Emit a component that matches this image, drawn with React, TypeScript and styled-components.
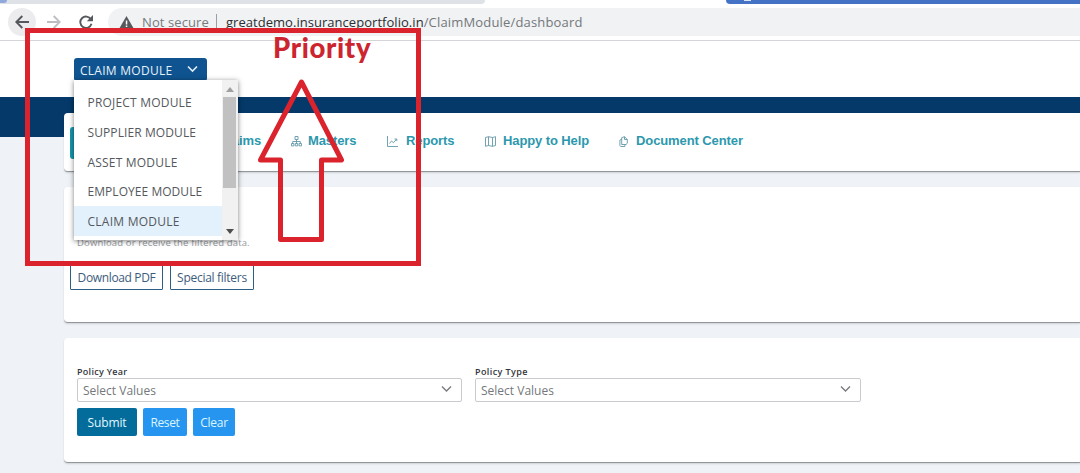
import React from "react";
import styled, { createGlobalStyle } from "styled-components";

const GlobalStyle = createGlobalStyle`
  * { box-sizing: border-box; }
  html, body { margin: 0; height: 473px; overflow: hidden; background: #eff3f7; }
  body { font-family: "Open Sans", "Noto Sans", sans-serif; }
`;

const Screen = styled.div`
  position: relative;
  width: 1080px;
  height: 473px;
  overflow: hidden;
  background: #eff3f7;
`;

const TabStrip = styled.div`
  display: flex;
  justify-content: space-between;
  height: 4px;
  background: #fff;
`;

const QuietTab = styled.div`
  width: 485px;
  background: #dee1e6;
  border-radius: 0 0 5px 0;
`;

const TabCorner = styled.div`
  width: 7px;
  height: 3px;
  background: #8fa9dc;
  border-radius: 0 0 5px 0;
`;

const BlueStrip = styled.div`
  width: 354px;
  background: #4472c4;
  border-radius: 0 0 0 5px;
  padding-left: 18px;
`;

const Favicon = styled.div`
  width: 7px;
  height: 1px;
  background: #dbe5f6;
`;

const BrowserBar = styled.div`
  display: flex;
  align-items: flex-start;
  height: 37px;
  padding: 4px 0 0 8px;
  background: #fff;
  border-bottom: 1px solid #d3d5d8;
`;

const RoundButton = styled.div<{ $active?: boolean }>`
  display: flex;
  align-items: center;
  justify-content: center;
  width: 28px;
  height: 28px;
  margin-right: 4px;
  border-radius: 50%;
  background: ${(p) => (p.$active ? "#ececee" : "transparent")};
`;

const AddressBar = styled.div`
  display: flex;
  align-items: center;
  flex: 1;
  height: 28px;
  margin-left: 4px;
  padding-left: 11px;
  border-radius: 14px 0 0 14px;
  background: #f0f2f4;
`;

const Label = styled.span<{ $size: number; $color: string; $track?: number; $weight?: number }>`
  font-size: ${(p) => p.$size}px;
  color: ${(p) => p.$color};
  letter-spacing: ${(p) => p.$track ?? 0}px;
  font-weight: ${(p) => p.$weight ?? 400};
  white-space: nowrap;
`;

const SecurityNote = styled(Label)`
  margin-left: 8px;
`;

const Separator = styled.div`
  width: 1px;
  height: 16px;
  margin: 0 9px 0 7px;
  background: #9b9ea2;
`;

const Header = styled.header`
  height: 56px;
  padding: 17px 0 0 74px;
  background: #fff;
`;

const ModulePicker = styled.div`
  position: relative;
  width: 133px;
`;

const ModuleButton = styled.div`
  display: flex;
  align-items: center;
  justify-content: space-between;
  height: 22px;
  padding: 2px 9px 0 6px;
  border-radius: 3px 3px 1px 1px;
  background: #0f5490;
  svg { margin-top: -3px; }
`;

const ModuleMenu = styled.div`
  position: absolute;
  z-index: 2;
  top: 22px;
  left: 0;
  display: flex;
  width: 164px;
  height: 160px;
  background: #fff;
  box-shadow: 0 1px 5px rgba(0, 0, 0, 0.5);
`;

const MenuList = styled.div`
  flex: 1;
  padding-top: 7px;
`;

const MenuItem = styled.div<{ $selected?: boolean }>`
  display: flex;
  align-items: center;
  height: 29.75px;
  padding: 1.5px 0 0 13.5px;
  background: ${(p) => (p.$selected ? "#e3f1fc" : "transparent")};
`;

const Scrollbar = styled.div`
  display: flex;
  flex-direction: column;
  align-items: center;
  width: 16px;
  padding: 7px 0 6px;
  background: #f1f1f1;
`;

const Thumb = styled.div`
  width: 13px;
  height: 91px;
  margin: 5px 1px auto 0;
  background: #c1c1c1;
`;

const Body = styled.main`
  padding: 16px 0 0 64px;
  background: linear-gradient(#04396a 40px, #eff3f7 40px);
`;

const Card = styled.section<{ $height: number }>`
  height: ${(p) => p.$height}px;
  margin-bottom: 15px;
  background: #fff;
  border-bottom: 1px solid #92979c;
  border-radius: 4px 0 0 4px;
  box-shadow: 0 1px 2px rgba(0, 0, 0, 0.14);
`;

const NavRow = styled.nav`
  display: flex;
  align-items: center;
  height: 54px;
  padding-left: 6px;
`;

const ActiveTab = styled.div`
  width: 88px;
  height: 32px;
  margin: 5px 44px 0 0;
  border-radius: 3px;
  background: #1796ac;
`;

const NavItem = styled.div<{ $gap: number; $width: number }>`
  display: flex;
  align-items: center;
  gap: ${(p) => p.$gap}px;
  width: ${(p) => p.$width}px;
  font: bold 13px "Liberation Sans", Arial, sans-serif;
  letter-spacing: -0.1px;
  color: #2c98ae;
  white-space: nowrap;
  svg { flex: none; margin-top: 3px; }
`;

const ExportArea = styled.div`
  padding: 47px 0 0 6px;
`;

const Hint = styled.div`
  height: 16px;
  padding-left: 7px;
  line-height: 12px;
`;

const ButtonRow = styled.div<{ $gap: number; $top: number }>`
  display: flex;
  gap: ${(p) => p.$gap}px;
  margin-top: ${(p) => p.$top}px;
`;

const OutlineButton = styled.div<{ $width: number }>`
  display: flex;
  align-items: center;
  justify-content: center;
  width: ${(p) => p.$width}px;
  height: 27px;
  padding-top: 1px;
  border: 1px solid #2b5f86;
  border-radius: 1px;
`;

const SolidButton = styled.div<{ $width: number; $fill: string }>`
  display: flex;
  align-items: center;
  justify-content: center;
  width: ${(p) => p.$width}px;
  height: 28px;
  padding-top: 1px;
  border-radius: 2px;
  background: ${(p) => p.$fill};
`;

const FilterForm = styled.div`
  padding: 26px 0 0 13px;
`;

const FieldRow = styled.div`
  display: flex;
  gap: 13px;
`;

const Field = styled.div<{ $width: number }>`
  display: flex;
  flex-direction: column;
  width: ${(p) => p.$width}px;
`;

const FieldName = styled.div`
  height: 14px;
  padding-top: 1px;
  line-height: 13px;
  font-size: 0;
`;

const SelectBox = styled.div`
  display: flex;
  align-items: center;
  justify-content: space-between;
  height: 24px;
  padding: 2px 9px 0 5px;
  border: 1px solid #c9cbce;
  border-radius: 2px;
  line-height: 14px;
  svg { margin-top: -5px; }
`;

const Annotation = styled.div`
  position: absolute;
  z-index: 3;
  top: 28px;
  left: 25px;
  width: 396px;
  height: 238px;
  border: 5px solid #db232d;
`;

const Callout = styled.div`
  position: absolute;
  top: -1px;
  left: 243px;
  font: 900 27.5px/32px Lato, sans-serif;
  color: #cc2530;
  letter-spacing: 0.65px;
`;

const ArrowMark = styled.svg`
  position: absolute;
  top: 45px;
  left: 225px;
`;

const Chevron = ({ color, width }: { color: string; width: number }) => (
  <svg width="11" height="8" viewBox="0 0 11 8" fill="none" stroke={color} strokeWidth={width}>
    <path d="M1 1.5 5.5 6 10 1.5" />
  </svg>
);

const NavIcon = ({ children }: { children: React.ReactNode }) => (
  <svg width="11" height="11" viewBox="0 0 11 11" fill="none" stroke="#6299a8" strokeWidth="0.9">
    {children}
  </svg>
);

const modules = [
  { name: "PROJECT MODULE", track: 0.2 },
  { name: "SUPPLIER MODULE", track: 0.1 },
  { name: "ASSET MODULE", track: 0.2 },
  { name: "EMPLOYEE MODULE", track: 0.05 },
  { name: "CLAIM MODULE", track: 0.25 },
];

export default function App() {
  return (
    <Screen>
      <GlobalStyle />
      <TabStrip>
        <QuietTab><TabCorner /></QuietTab>
        <BlueStrip><Favicon /></BlueStrip>
      </TabStrip>
      <BrowserBar>
        <RoundButton $active>
          <svg width="14" height="14" viewBox="0 0 14 14" fill="none" stroke="#55585c" strokeWidth="1.9"><path d="M14 7H1.5M7.3 1 1.3 7l6 6" /></svg>
        </RoundButton>
        <RoundButton>
          <svg width="14" height="14" viewBox="0 0 14 14" fill="none" stroke="#bcbec1" strokeWidth="1.8"><path d="M0 7h12.5M6.7 1l6 6-6 6" /></svg>
        </RoundButton>
        <RoundButton>
          <svg width="14" height="14" viewBox="0 0 14 14"><path d="M11.9 4.3A5.7 5.7 0 1 0 12.5 8.8" fill="none" stroke="#55585c" strokeWidth="1.9" /><path d="M14 0v6.2H7.8z" fill="#55585c" /></svg>
        </RoundButton>
        <AddressBar>
          <svg width="15" height="13" viewBox="0 0 15 13"><path d="M7.5 0 15 13H0z" fill="#55585c" /><path d="M6.8 4.5h1.5v4H6.8zM6.8 9.5h1.5V11H6.8z" fill="#fff" /></svg>
          <SecurityNote $size={13} $color="#777a7e" $track={0.1}>Not secure</SecurityNote>
          <Separator />
          <Label $size={13} $color="#2c2e31" $track={0.04}>greatdemo.insuranceportfolio.in</Label>
          <Label $size={13} $color="#74777b" $track={0.17}>/ClaimModule/dashboard</Label>
        </AddressBar>
      </BrowserBar>
      <Header>
        <ModulePicker>
          <ModuleButton>
            <Label $size={12} $color="#e6f2fb" $track={0.27}>CLAIM MODULE</Label>
            <Chevron color="#e3eff9" width={1.6} />
          </ModuleButton>
          <ModuleMenu>
            <MenuList>
              {modules.map((m) => (
                <MenuItem key={m.name} $selected={m.name === "CLAIM MODULE"}>
                  <Label $size={12} $color="#55585d" $track={m.track}>{m.name}</Label>
                </MenuItem>
              ))}
            </MenuList>
            <Scrollbar>
              <svg width="8" height="5" viewBox="0 0 8 5"><path d="M0 5 4 0l4 5z" fill="#a0a0a0" /></svg>
              <Thumb />
              <svg width="8" height="5" viewBox="0 0 8 5"><path d="M0 0h8L4 5z" fill="#4d4d4d" /></svg>
            </Scrollbar>
          </ModuleMenu>
        </ModulePicker>
      </Header>
      <Body>
        <Card $height={59}>
          <NavRow>
            <ActiveTab />
            <NavItem $gap={6} $width={89}>
              <NavIcon><path d="M1 1h9v9H1z" /></NavIcon>Claims
            </NavItem>
            <NavItem $gap={6} $width={96}>
              <NavIcon><path d="M4 .5h3v3H4zM.5 7.5h2.4v2.4H.5zM4.3 7.5h2.4v2.4H4.3zM8.1 7.5h2.4v2.4H8.1zM5.5 3.5v4M1.7 7.5v-2h7.6v2" /></NavIcon>Masters
            </NavItem>
            <NavItem $gap={8} $width={98}>
              <NavIcon><path d="M.5 0v10.5H11M2.5 7.5l2-2.5 2 1.7L9.7 3M7.5 3h2.3v2" /></NavIcon>Reports
            </NavItem>
            <NavItem $gap={7} $width={133}>
              <NavIcon><path d="M.5 1.5 3.5.7l4 .8 3-.8v8.8l-3 .8-4-.8-3 .8zM3.5.7v8.8M7.5 1.5v8.8" /></NavIcon>Happy to Help
            </NavItem>
            <NavItem $gap={7} $width={130}>
              <NavIcon><path d="M3.7 1.7 6.5.7 9.3 3.5v3.8L8 8.500H3.7zM6.5.7v2.8h2.8M3.700 3.2 1.9 4v5.7l.8.800h4.200v-2" /></NavIcon>Document Center
            </NavItem>
          </NavRow>
        </Card>
        <Card $height={136}>
          <ExportArea>
            <Hint><Label $size={9.5} $color="#94989d" $track={0.15}>Download or receive the filtered data.</Label></Hint>
            <ButtonRow $gap={7} $top={13}>
              <OutlineButton $width={93}><Label $size={12} $color="#3c5c7c" $track={-0.35}>Download PDF</Label></OutlineButton>
              <OutlineButton $width={84}><Label $size={12} $color="#3c5c7c" $track={-0.28}>Special filters</Label></OutlineButton>
            </ButtonRow>
          </ExportArea>
        </Card>
        <Card $height={125}>
          <FilterForm>
            <FieldRow>
              <Field $width={385}>
                <FieldName><Label $size={9} $color="#33363d" $track={0.28} $weight={600}>Policy Year</Label></FieldName>
                <SelectBox><Label $size={12} $color="#74787c">Select Values</Label><Chevron color="#77797c" width={1.3} /></SelectBox>
              </Field>
              <Field $width={386}>
                <FieldName><Label $size={9} $color="#33363d" $track={0.4} $weight={600}>Policy Type</Label></FieldName>
                <SelectBox><Label $size={12} $color="#74787c">Select Values</Label><Chevron color="#77797c" width={1.3} /></SelectBox>
              </Field>
            </FieldRow>
            <ButtonRow $gap={6} $top={6}>
              <SolidButton $width={60} $fill="#046c9a"><Label $size={12} $color="#e2f8ff" $track={-0.1} $weight={500}>Submit</Label></SolidButton>
              <SolidButton $width={44} $fill="#2695f0"><Label $size={12} $color="#dcf5ff" $track={-0.35} $weight={500}>Reset</Label></SolidButton>
              <SolidButton $width={42} $fill="#2695f0"><Label $size={12} $color="#dcf5ff" $track={-0.25} $weight={500}>Clear</Label></SolidButton>
            </ButtonRow>
          </FilterForm>
        </Card>
      </Body>
      <Annotation>
        <Callout>Priority</Callout>
        <ArrowMark width="92" height="168" viewBox="225 45 92 168" fill="none" stroke="#db232d" strokeWidth="5" strokeLinejoin="round">
          <path d="M271.5 49 311.500 127H291.5V206.5H250.5V127H230.500Z" />
        </ArrowMark>
      </Annotation>
    </Screen>
  );
}
